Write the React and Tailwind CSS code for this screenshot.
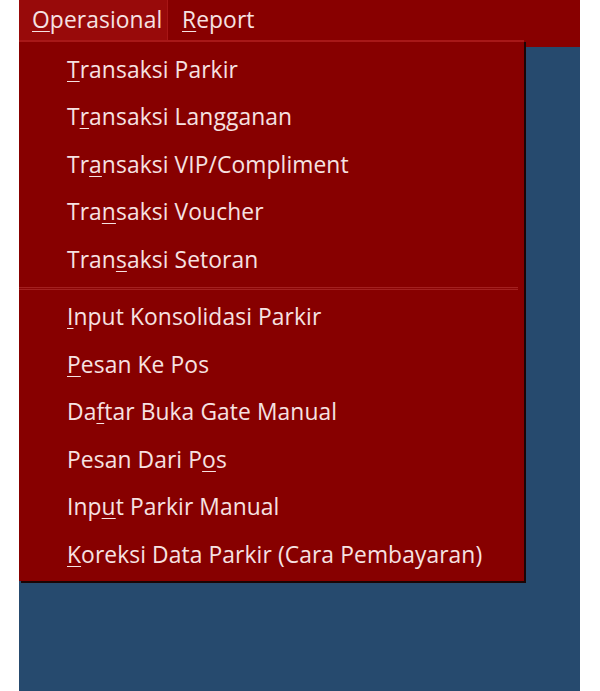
import React from "react";

const U = ({ children }) => (
  <span className="underline decoration-1 underline-offset-[3px]">{children}</span>
);

const group1 = [
  ["", "T", "ransaksi Parkir"],
  ["T", "r", "ansaksi Langganan"],
  ["Tr", "a", "nsaksi VIP/Compliment"],
  ["Tra", "n", "saksi Voucher"],
  ["Tran", "s", "aksi Setoran"],
];
const group2 = [
  ["", "I", "nput Konsolidasi Parkir"],
  ["", "P", "esan Ke Pos"],
  ["Da", "f", "tar Buka Gate Manual"],
  ["Pesan Dari P", "o", "s"],
  ["Inp", "u", "t Parkir Manual"],
  ["", "K", "oreksi Data Parkir (Cara Pembayaran)"],
];

function Item({ parts }) {
  return (
    <div className="h-[47.5px] flex items-center pl-[48px] whitespace-nowrap">
      <span>
        {parts[0]}
        <U>{parts[1]}</U>
        {parts[2]}
      </span>
    </div>
  );
}

export default function App() {
  return (
    <div
      className="w-[600px] h-[691px] bg-white flex text-[#f6e2e2] text-[22.8px] tracking-[0.1px]"
      style={{ fontFamily: '"Open Sans", "Noto Sans", sans-serif' }}
    >
      <div className="ml-[19px] w-[561px] h-full flex flex-col relative">
        <div className="h-[47px] bg-[#880000] flex items-stretch">
          <div className="h-[40px] w-[149px] bg-[#980a0a] border-r border-[#a81616] flex items-center pl-[13px]">
            <span>
              <U>O</U>perasional
            </span>
          </div>
          <div className="h-[40px] flex items-center pl-[14px]">
            <span>
              <U>R</U>eport
            </span>
          </div>
        </div>
        <div className="flex-1 bg-[#264a6e]" />

        <div className="absolute left-0 top-[40px] w-[505px] h-[541px] bg-[#870000] border-t-2 border-[#a81818] shadow-[2px_2px_0_#1a0505] flex flex-col pt-[4px]">
          {group1.map((p, i) => (
            <Item key={i} parts={p} />
          ))}
          <div className="h-[10px] flex items-center">
            <div className="w-[499px] h-[3px] border-t border-b border-[#a42020] bg-[#8c0505]" />
          </div>
          {group2.map((p, i) => (
            <Item key={i} parts={p} />
          ))}
        </div>
      </div>
    </div>
  );
}
